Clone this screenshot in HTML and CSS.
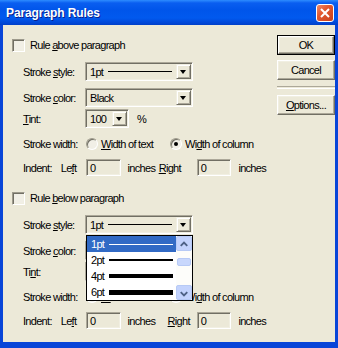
FILE: index.html
```html
<!DOCTYPE html>
<html lang="en">
<head>
    <meta charset="UTF-8">
    <title>Paragraph Rules</title>
    <link rel="stylesheet" href="styles.css">
</head>
<body>
    <div class="window">
        <div class="titlebar">
            <span class="title">Paragraph Rules</span>
            <span class="close">
                <svg width="12" height="12" viewBox="0 0 12 12"><path d="M2 2 L10 10 M10 2 L2 10" stroke="#fff" stroke-width="2" fill="none"/></svg>
            </span>
        </div>
        <div class="frame">
            <div class="rules">
                <!-- Rule above -->
                <div class="row check-row">
                    <span class="checkbox"></span>
                    <span>Rule <u>a</u>bove paragraph</span>
                </div>
                <div class="row">
                    <span class="label">Stroke <u>s</u>tyle:</span>
                    <div class="combo wide">
                        <span class="value">1pt</span><span class="stroke"></span>
                        <span class="arrow"></span>
                    </div>
                </div>
                <div class="row">
                    <span class="label">Stroke <u>c</u>olor:</span>
                    <div class="combo wide">
                        <span class="value">Black</span>
                        <span class="arrow"></span>
                    </div>
                </div>
                <div class="row tint">
                    <span class="label"><u>T</u>int:</span>
                    <div class="combo small">
                        <span class="value">100</span>
                        <span class="arrow"></span>
                    </div>
                    <span class="unit">%</span>
                </div>
                <div class="row width">
                    <span class="label">Stroke width:</span>
                    <span class="option"><span class="radio"></span><span><u>W</u>idth of text</span></span>
                    <span class="option"><span class="radio on"></span><span>Wi<u>d</u>th of column</span></span>
                </div>
                <div class="row indent">
                    <span class="label split"><span>Indent:</span><span class="side">Le<u>f</u>t</span></span>
                    <span class="field">0</span>
                    <span class="unit">inches</span>
                    <span class="right-label first"><u>R</u>ight</span>
                    <span class="field">0</span>
                    <span class="unit">inches</span>
                </div>

                <!-- Rule below -->
                <div class="row check-row below">
                    <span class="checkbox"></span>
                    <span>Rule <u>b</u>elow paragraph</span>
                </div>
                <div class="row">
                    <span class="label">Stroke <u>s</u>tyle:</span>
                    <div class="combo wide">
                        <span class="value">1pt</span><span class="stroke"></span>
                        <span class="arrow"></span>
                    </div>
                </div>
                <div class="row">
                    <span class="label">Stroke <u>c</u>olor:</span>
                    <div class="combo wide">
                        <span class="value">Black</span>
                        <span class="arrow"></span>
                    </div>
                </div>
                <div class="row tint">
                    <span class="label">Ti<u>n</u>t:</span>
                    <div class="combo small">
                        <span class="value">100</span>
                        <span class="arrow"></span>
                    </div>
                    <span class="unit">%</span>
                </div>
                <div class="row width">
                    <span class="label">Stroke width:</span>
                    <span class="option"><span class="radio"></span><span><u>W</u>idth of text</span></span>
                    <span class="option"><span class="radio on"></span><span>Wi<u>d</u>th of column</span></span>
                </div>
                <div class="row indent">
                    <span class="label split"><span>Indent:</span><span class="side">Le<u>f</u>t</span></span>
                    <span class="field">0</span>
                    <span class="unit">inches</span>
                    <span class="right-label"><u>R</u>ight</span>
                    <span class="field">0</span>
                    <span class="unit">inches</span>
                </div>
            </div>

            <div class="buttons">
                <div class="default"><span class="button">OK</span></div>
                <span class="button">Cancel</span>
                <div class="separator"></div>
                <span class="button"><u>O</u>ptions...</span>
            </div>
        </div>

        <!-- Open stroke style list -->
        <div class="list">
            <div class="items">
                <div class="item selected"><span>1pt</span><span class="stroke s1"></span></div>
                <div class="item"><span>2pt</span><span class="stroke s2"></span></div>
                <div class="item"><span>4pt</span><span class="stroke s4"></span></div>
                <div class="item"><span>6pt</span><span class="stroke s6"></span></div>
            </div>
            <div class="scrollbar">
                <span class="scroll-btn">
                    <svg width="15" height="15" viewBox="0 0 15 15"><path d="M4 9 L7.5 5.5 L11 9" stroke="#4d6185" stroke-width="2" fill="none"/></svg>
                </span>
                <div class="track"><span class="thumb"></span></div>
                <span class="scroll-btn">
                    <svg width="15" height="15" viewBox="0 0 15 15"><path d="M4 6 L7.5 9.5 L11 6" stroke="#4d6185" stroke-width="2" fill="none"/></svg>
                </span>
            </div>
        </div>
    </div>
</body>
</html>
```

FILE: styles.css
```css
/* Basic page styling */
body {
    margin: 0;
    font-family: "Liberation Sans", Arial, sans-serif;
    font-size: 11px;
    letter-spacing: -0.7px;
    color: #000;
}

u {
    text-decoration-thickness: 1px;
    text-underline-offset: 1px;
}

/* Dialog window */
.window {
    position: relative;
    width: 338px;
    height: 348px;
    display: flex;
    flex-direction: column;
    background-color: #ece9d8;
}

.titlebar {
    flex: none;
    height: 25px;
    display: flex;
    align-items: center;
    padding: 0 4px 0 6px;
    background: linear-gradient(#2d8cff 0, #0a5ef0 3px, #0055ea 10px, #0159ee 18px, #0047d6 23px, #0040c8 25px);
}

.title {
    color: #fff;
    font-weight: bold;
    font-size: 12px;
    letter-spacing: -0.1px;
    text-shadow: 1px 1px #0a1f8a;
}

.close {
    margin-left: auto;
    width: 16px;
    height: 16px;
    display: flex;
    align-items: center;
    justify-content: center;
    border: 1px solid #fff;
    border-radius: 3px;
    background: linear-gradient(135deg, #f08a6a 0, #e2582f 40%, #c8401c 100%);
}

.frame {
    flex: 1;
    display: flex;
    border-style: solid;
    border-width: 0 3px 6px;
    border-color: #0845d8;
}

/* Left column with the two rule groups */
.rules {
    width: 256px;
    padding: 10px 0 0 9px;
    white-space: nowrap;
}

.row {
    display: flex;
    align-items: center;
    height: 19px;
    margin-top: 7px;
}

.check-row {
    height: 20px;
    margin-top: 0;
}

.check-row.below {
    margin-top: 12px;
}

.row.tint {
    margin-top: 2px;
}

.row.width {
    height: 18px;
}

.row.indent {
    height: 17px;
    margin-top: 6px;
}

.label {
    flex: none;
    width: 62px;
    margin-left: 11px;
}

.label.split {
    display: flex;
}

.side {
    margin-left: 9px;
}

.checkbox {
    width: 11px;
    height: 11px;
    margin: 0 5px 0 0;
    border: 1px solid;
    border-color: #9d9a8c #fff #fff #9d9a8c;
    box-shadow: inset 1px 1px #716f64, inset -1px -1px #f1efe2;
    background: #f1efe6;
}

/* Combo boxes */
.combo {
    position: relative;
    height: 19px;
    box-sizing: border-box;
    display: flex;
    align-items: center;
    padding-left: 4px;
    border: 1px solid;
    border-color: #aca899 #fff #fff #aca899;
    box-shadow: inset 1px 1px #716f64, inset -1px -1px #f1efe2;
}

.combo.wide {
    width: 108px;
}

.combo.small {
    width: 44px;
}

.combo .stroke {
    width: 64px;
    height: 1px;
    margin-left: 5px;
    background: #000;
}

.arrow {
    position: absolute;
    right: 1px;
    top: 1px;
    width: 13px;
    height: 13px;
    border: 1px solid;
    border-color: #f1efe2 #716f64 #716f64 #f1efe2;
    box-shadow: inset 1px 1px #fff, inset -1px -1px #aca899;
    background: #ece9d8;
}

.arrow::after {
    content: "";
    position: absolute;
    left: 3px;
    top: 5px;
    border-style: solid;
    border-width: 4px 3.5px 0;
    border-color: #000 transparent transparent;
}

.unit {
    margin-left: 7px;
}

.row.tint .unit {
    margin-left: 8px;
}

.row.indent .unit {
    width: 30px;
}

/* Radio buttons */
.option {
    display: flex;
    align-items: center;
    width: 84px;
    margin-left: 1px;
}

.option + .option {
    margin-left: 0;
    width: auto;
}

.radio {
    position: relative;
    width: 10px;
    height: 10px;
    margin-right: 3px;
    border-radius: 50%;
    border: 1px solid;
    border-color: #9d9a8c #fff #fff #9d9a8c;
    box-shadow: inset 1px 1px #716f64;
    background: #f1efe6;
}

.radio.on::after {
    content: "";
    position: absolute;
    left: 3px;
    top: 3px;
    width: 4px;
    height: 4px;
    border-radius: 50%;
    background: #000;
}

/* Indent fields */
.field {
    width: 35px;
    height: 17px;
    box-sizing: border-box;
    margin-left: 1px;
    padding-left: 3px;
    display: flex;
    align-items: center;
    border: 1px solid;
    border-color: #aca899 #fff #fff #aca899;
    box-shadow: inset 1px 1px #716f64, inset -1px -1px #f1efe2;
}

.right-label {
    width: 39px;
    box-sizing: border-box;
    padding-right: 6px;
    text-align: right;
}

.right-label.first {
    padding-right: 15px;
}

/* Right column buttons */
.buttons {
    width: 58px;
    margin-left: 9px;
    padding-top: 10px;
    display: flex;
    flex-direction: column;
}

.button {
    height: 20px;
    box-sizing: border-box;
    display: flex;
    align-items: center;
    justify-content: center;
    border: 1px solid;
    border-color: #fff #716f64 #716f64 #fff;
    box-shadow: inset -1px -1px #aca899, inset 1px 1px #f1efe2;
    background: #ece9d8;
    margin-top: 5px;
}

.default {
    border: 1px solid #000;
}

.default .button {
    height: 18px;
    margin-top: 0;
}

.separator {
    height: 1px;
    margin-top: 6px;
    border-top: 1px solid #aca899;
    border-bottom: 1px solid #fff;
}

.separator + .button {
    margin-top: 6px;
}

/* Open drop-down list over the second group */
.list {
    position: absolute;
    left: 86px;
    top: 235px;
    width: 107px;
    height: 66px;
    box-sizing: border-box;
    display: flex;
    border: 1px solid #000;
    background: #fff;
}

.items {
    flex: 1;
}

.item {
    height: 16px;
    display: flex;
    align-items: center;
    padding-left: 4px;
}

.item.selected {
    background: #316ac5;
    color: #fff;
}

.item .stroke {
    width: 64px;
    margin-left: 5px;
    background: #000;
}

.item.selected .stroke {
    background: #fff;
}

.s1 { height: 1px; }
.s2 { height: 2px; }
.s4 { height: 4px; }
.s6 { height: 5px; }

.scrollbar {
    width: 16px;
    display: flex;
    flex-direction: column;
    background: #fdfdfa;
}

.scroll-btn {
    height: 15px;
    box-sizing: border-box;
    display: flex;
    border: 1px solid #b7caf5;
    border-radius: 2px;
    background: #c3d3fd;
}

.track {
    flex: 1;
    padding-top: 7px;
}

.thumb {
    display: block;
    height: 6px;
    margin: 0 1px 0 1px;
    border: 1px solid #b7caf5;
    border-radius: 2px;
    background: #c8d7fc;
}
```
